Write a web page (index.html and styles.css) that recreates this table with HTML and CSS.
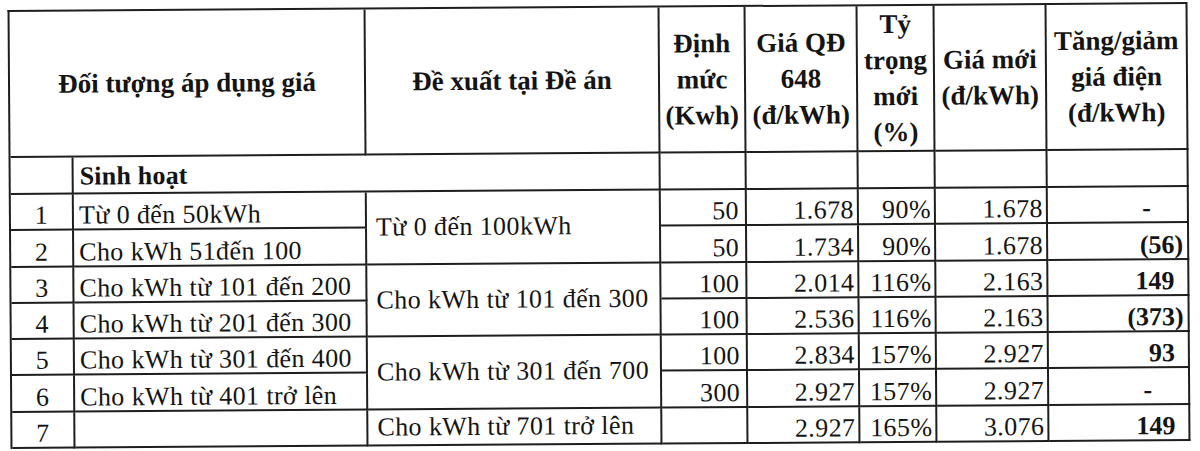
FILE: index.html
```html
<!DOCTYPE html>
<html lang="vi">
<head>
<meta charset="utf-8">
<title>Bảng giá điện</title>
<link rel="stylesheet" href="styles.css">
</head>
<body>
<main class="sheet">
<table class="tariff">
  <colgroup>
    <col class="c-stt"><col class="c-obj"><col class="c-prop"><col class="c-quota">
    <col class="c-old"><col class="c-ratio"><col class="c-new"><col class="c-diff">
  </colgroup>
  <thead>
    <tr class="head">
      <th colspan="2">Đối tượng áp dụng giá</th>
      <th>Đề xuất tại Đề án</th>
      <th>Định<br>mức<br>(Kwh)</th>
      <th>Giá QĐ<br>648<br>(đ/kWh)</th>
      <th>Tỷ<br>trọng<br>mới<br>(%)</th>
      <th>Giá mới<br>(đ/kWh)</th>
      <th>Tăng/giảm<br>giá điện<br>(đ/kWh)</th>
    </tr>
  </thead>
  <tbody>
    <tr class="group">
      <td></td>
      <td colspan="2" class="group-name">Sinh hoạt</td>
      <td></td><td></td><td></td><td></td><td></td>
    </tr>
    <tr>
      <td class="stt">1</td>
      <td class="txt">Từ 0 đến 50kWh</td>
      <td class="prop" rowspan="2">Từ 0 đến 100kWh</td>
      <td class="num q">50</td>
      <td class="num">1.678</td>
      <td class="num">90%</td>
      <td class="num">1.678</td>
      <td class="diff nil">-</td>
    </tr>
    <tr>
      <td class="stt">2</td>
      <td class="txt">Cho kWh 51đến 100</td>
      <td class="num q">50</td>
      <td class="num">1.734</td>
      <td class="num">90%</td>
      <td class="num">1.678</td>
      <td class="diff">(56)</td>
    </tr>
    <tr>
      <td class="stt">3</td>
      <td class="txt">Cho kWh từ 101 đến 200</td>
      <td class="prop" rowspan="2">Cho kWh từ 101 đến 300</td>
      <td class="num q">100</td>
      <td class="num">2.014</td>
      <td class="num">116%</td>
      <td class="num">2.163</td>
      <td class="diff pos">149</td>
    </tr>
    <tr>
      <td class="stt">4</td>
      <td class="txt">Cho kWh từ 201 đến 300</td>
      <td class="num q">100</td>
      <td class="num">2.536</td>
      <td class="num">116%</td>
      <td class="num">2.163</td>
      <td class="diff">(373)</td>
    </tr>
    <tr>
      <td class="stt">5</td>
      <td class="txt">Cho kWh từ 301 đến 400</td>
      <td class="prop" rowspan="2">Cho kWh từ 301 đến 700</td>
      <td class="num q">100</td>
      <td class="num">2.834</td>
      <td class="num">157%</td>
      <td class="num">2.927</td>
      <td class="diff pos">93</td>
    </tr>
    <tr>
      <td class="stt">6</td>
      <td class="txt">Cho kWh từ 401 trở lên</td>
      <td class="num q">300</td>
      <td class="num">2.927</td>
      <td class="num">157%</td>
      <td class="num">2.927</td>
      <td class="diff nil">-</td>
    </tr>
    <tr>
      <td class="stt">7</td>
      <td class="txt"></td>
      <td class="prop">Cho kWh từ 701 trở lên</td>
      <td class="num q"></td>
      <td class="num">2.927</td>
      <td class="num">165%</td>
      <td class="num">3.076</td>
      <td class="diff pos">149</td>
    </tr>
  </tbody>
</table>
</main>
</body>
</html>
```
FILE: styles.css
```css
html, body {
  margin: 0;
  padding: 0;
  background: #ffffff;
}

html {
  height: 100%;
}

body {
  min-height: 100%;
  font-family: "Liberation Serif", "Times New Roman", serif;
  color: #141414;
}

.sheet {
  display: block;
  width: 1200px;
  height: 451px;
  padding: 6px 0 0 9px;
  box-sizing: border-box;
  overflow: hidden;
}

.tariff {
  border-collapse: separate;
  border-spacing: 0;
  border-top: 2px solid #1e1e1e;
  border-left: 2px solid #1e1e1e;
  table-layout: fixed;
  width: 1180px;
  transform: rotate(-0.39deg);
  transform-origin: 50% 50%;
}

.c-stt { width: 63px; }
.c-obj { width: 293px; }
.c-prop { width: 294px; }
.c-quota { width: 86px; }
.c-old { width: 112px; }
.c-ratio { width: 77px; }
.c-new { width: 112px; }
.c-diff { width: 141px; }

.tariff th,
.tariff td {
  border-right: 2px solid #1e1e1e;
  border-bottom: 2px solid #1e1e1e;
  padding: 0;
  white-space: nowrap;
  box-sizing: border-box;
}

.tariff .head {
  height: 144px;
}

.head th {
  font-size: 27px;
  font-weight: bold;
  line-height: 36px;
  text-align: center;
  vertical-align: middle;
  overflow: visible;
}

.tariff .group {
  height: 37px;
}

.tariff tbody tr {
  height: 36.3px;
}

.tariff td {
  font-size: 26px;
  line-height: 26px;
  letter-spacing: 0.4px;
  vertical-align: bottom;
}

.tariff td.group-name {
  font-weight: bold;
  letter-spacing: 0.2px;
  padding: 0 0 3px 6px;
}

.stt {
  text-align: center;
}

.tariff td.txt {
  text-align: left;
  padding-left: 5px;
}

.tariff td.prop {
  text-align: left;
  vertical-align: middle;
  padding-left: 9px;
}

.tariff td.num {
  text-align: right;
  padding-right: 3px;
}

.tariff td.num.q {
  padding-right: 6px;
}

.tariff td.diff {
  text-align: right;
  font-weight: bold;
  letter-spacing: 0;
  padding-right: 4px;
}

.tariff td.diff.pos {
  padding-right: 13px;
}

.tariff td.diff.nil {
  padding-right: 36px;
}
```
